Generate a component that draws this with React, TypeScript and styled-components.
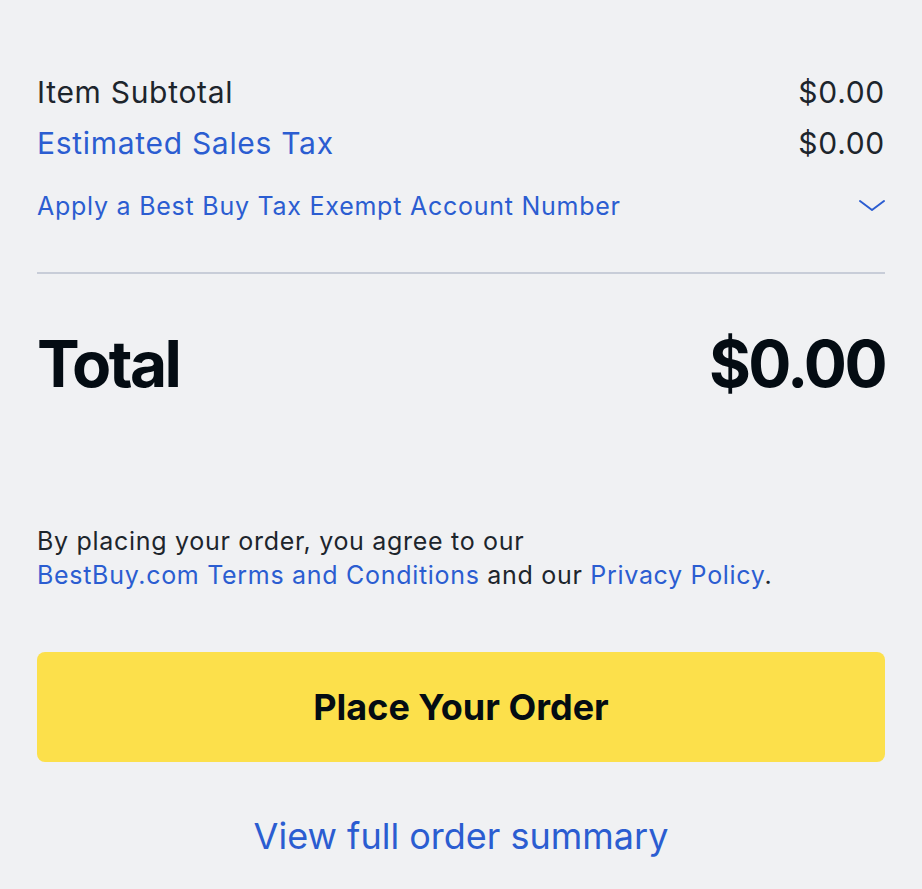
import React from "react";
import styled, { createGlobalStyle } from "styled-components";

const GlobalStyle = createGlobalStyle`
    html, body {
        margin: 0;
        padding: 0;
        background: #f0f1f3;
    }
    body {
        font-family: Inter, "Noto Sans", "Liberation Sans", sans-serif;
        color: #1d252c;
    }
`;

const Page = styled.div`
    padding: 67px 37px 0;
    width: 848px;
    display: flex;
    flex-direction: column;
`;

const SummaryRow = styled.div`
    display: flex;
    justify-content: space-between;
    align-items: center;
    font-size: 30px;
    line-height: 51px;
    letter-spacing: 0.7px;
`;

const Label = styled.span<{ $link?: boolean }>`
    color: ${(p) => (p.$link ? "#2b5dd1" : "#1d252c")};
`;

const Amount = styled.span`
    color: #1d252c;
`;

const ExemptRow = styled.div`
    margin-top: 20px;
    display: flex;
    justify-content: space-between;
    align-items: center;
    font-size: 25px;
    line-height: 34px;
    letter-spacing: 0.75px;
    color: #2b5dd1;
`;

const Divider = styled.hr`
    margin: 49px 0 0;
    border: 0;
    height: 2px;
    background: #c8cdd8;
`;

const TotalRow = styled.div`
    margin-top: 50px;
    display: flex;
    justify-content: space-between;
    align-items: center;
    font-size: 64px;
    line-height: 80px;
    font-weight: 700;
    letter-spacing: -2.6px;
    color: #040c13;
`;

const Legal = styled.p`
    margin: 120px 0 0;
    font-size: 25px;
    line-height: 34px;
    letter-spacing: 0.7px;
    color: #1d252c;
`;

const Link = styled.a`
    color: #2b5dd1;
    text-decoration: none;
`;

const PlaceOrderButton = styled.button`
    margin-top: 60px;
    height: 110px;
    width: 100%;
    border: 0;
    border-radius: 8px;
    background: #fce04b;
    color: #040c13;
    font-family: inherit;
    font-size: 36px;
    font-weight: 700;
`;

const SummaryLink = styled.a`
    margin-top: 52px;
    align-self: center;
    font-size: 36px;
    line-height: 44px;
    color: #2b5dd1;
    text-decoration: none;
`;

const Chevron = () => (
    <svg width="26" height="14" viewBox="0 0 26 14" fill="none">
        <path d="M1 2 L13 11 L25 2" stroke="#2b5dd1" strokeWidth="2" strokeLinecap="round" strokeLinejoin="round" />
    </svg>
);

export default function App() {
    return (
        <>
            <GlobalStyle />
            <Page>
                <SummaryRow>
                    <Label>Item Subtotal</Label>
                    <Amount>$0.00</Amount>
                </SummaryRow>
                <SummaryRow>
                    <Label $link>Estimated Sales Tax</Label>
                    <Amount>$0.00</Amount>
                </SummaryRow>
                <ExemptRow>
                    <span>Apply a Best Buy Tax Exempt Account Number</span>
                    <Chevron />
                </ExemptRow>
                <Divider />
                <TotalRow>
                    <span>Total</span>
                    <span>$0.00</span>
                </TotalRow>
                <Legal>
                    By placing your order, you agree to our
                    <br />
                    <Link href="#">BestBuy.com Terms and Conditions</Link> and our{" "}
                    <Link href="#">Privacy Policy</Link>.
                </Legal>
                <PlaceOrderButton>Place Your Order</PlaceOrderButton>
                <SummaryLink href="#">View full order summary</SummaryLink>
            </Page>
        </>
    );
}
